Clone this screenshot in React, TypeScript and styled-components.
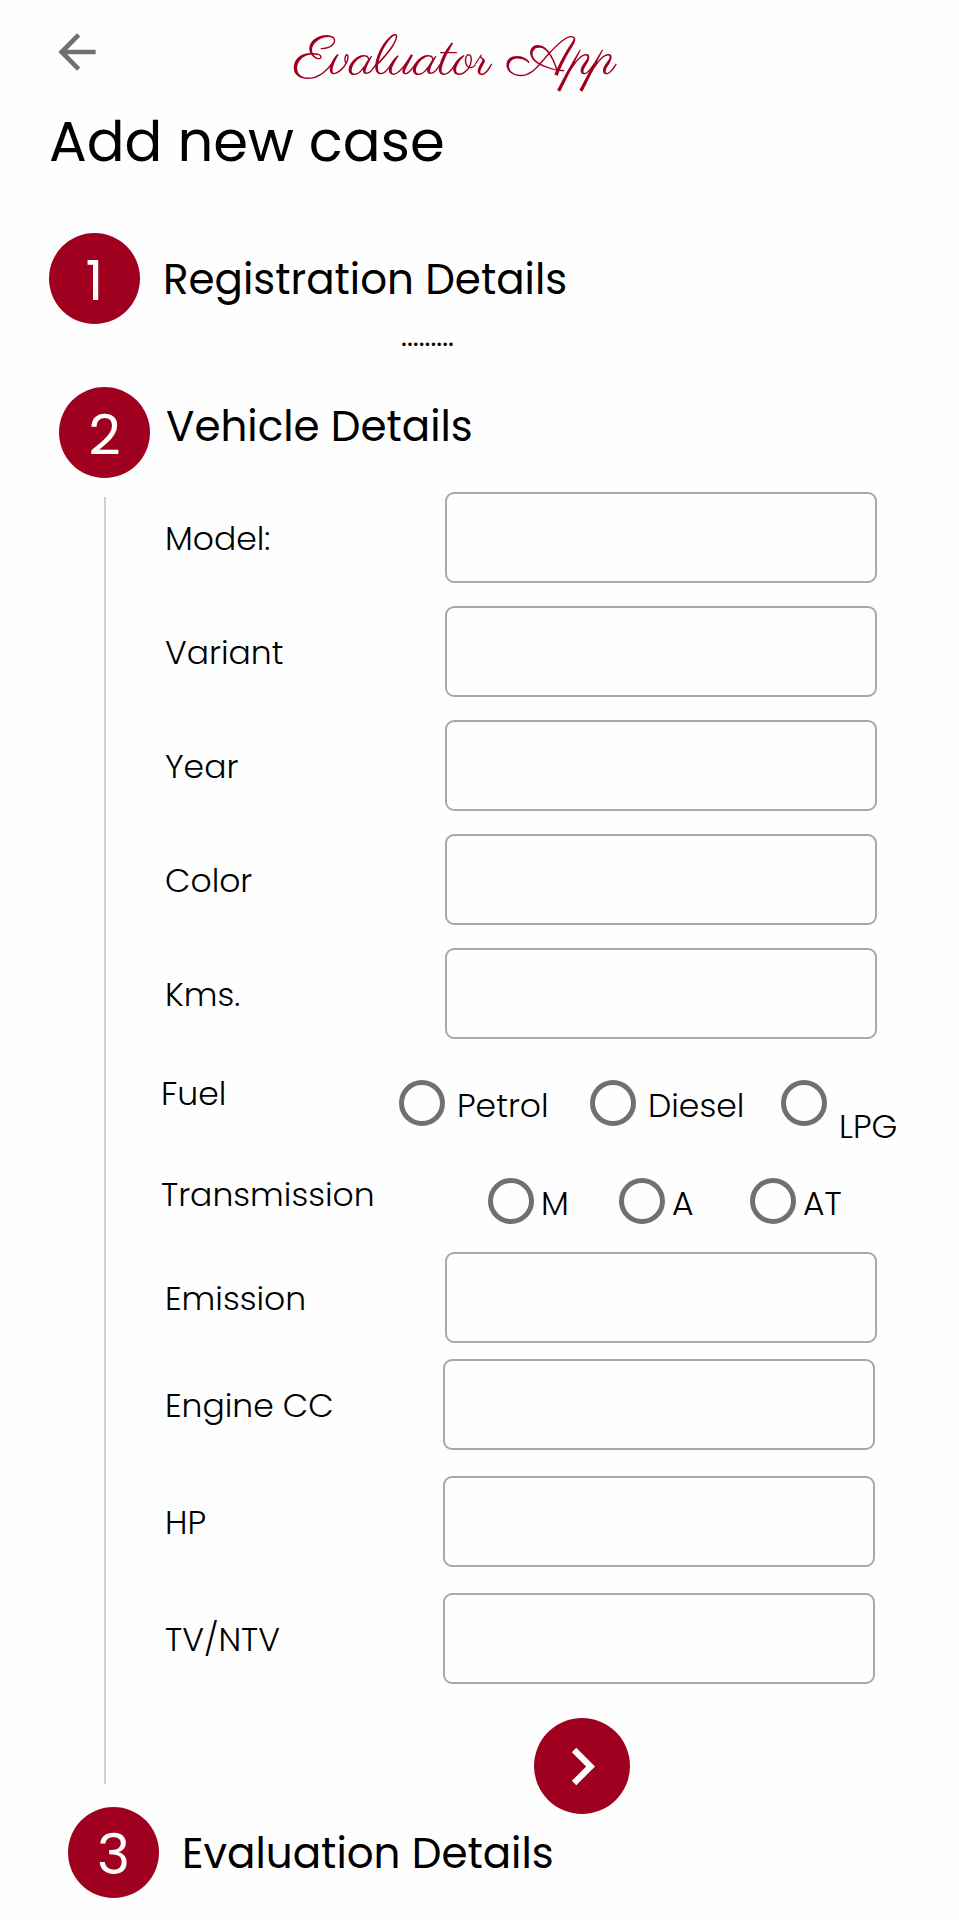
import React from "react";
import styled, { createGlobalStyle } from "styled-components";

const crimson = "#a00020";
const grey = "#707070";

const GlobalStyle = createGlobalStyle`
  *, *::before, *::after { box-sizing: border-box; }
  body {
    margin: 0;
    background: #fefefe;
    color: #000;
    font-family: Poppins, Inter, "Open Sans", sans-serif;
  }
`;

const Page = styled.main`
  padding: 24px 0 22px;
`;

const Header = styled.header`
  display: flex;
  align-items: flex-start;
  padding: 0 154px 0 49px;
`;

const BackButton = styled.button`
  width: 56px;
  height: 56px;
  padding: 0;
  border: 0;
  background: none;
  color: ${grey};
  cursor: pointer;
`;

const Brand = styled.div`
  flex: 1;
  padding-top: 9px;
  text-align: center;
  color: ${crimson};
  font-family: Parisienne, "Liberation Serif", cursive;
  font-size: 56px;
  line-height: 56px;
  white-space: nowrap;
`;

const Title = styled.h1`
  margin: 17px 49px 55px;
  font-size: 56px;
  line-height: 72px;
  font-weight: 400;
`;

const Step = styled.div<{ $indent: number; $gap: number; $raised?: boolean }>`
  display: flex;
  align-items: center;
  gap: ${(p) => p.$gap}px;
  padding-left: ${(p) => p.$indent}px;

  h2 {
    margin: 0;
    padding: ${(p) => (p.$raised ? "0 0 12px" : "2px 0 0")};
    font-size: 42px;
    line-height: 60px;
    font-weight: 400;
  }
`;

const StepNumber = styled.span`
  flex: none;
  width: 91px;
  height: 91px;
  border-radius: 50%;
  background: ${crimson};
  color: #fff;
  font-size: 56px;
  line-height: 96px;
  font-weight: 400;
  text-align: center;
`;

const Collapsed = styled.p`
  margin: 0 0 37px;
  padding-left: 401px;
  font-size: 28px;
  line-height: 26px;
`;

const StepBody = styled.div`
  display: grid;
  grid-template-columns: 2px minmax(0, 1fr);
  column-gap: 55px;
  padding: 14px 0 0 104px;
`;

const Rail = styled.div`
  margin: 5px 0 30px;
  background: #d0d0d0;
`;

const Form = styled.form`
  display: flex;
  flex-direction: column;
`;

const Fields = styled.div<{
  $gap: number;
  $labelWidth: number;
  $right: number;
  $top?: number;
}>`
  display: flex;
  flex-direction: column;
  gap: ${(p) => p.$gap}px;
  margin-top: ${(p) => p.$top ?? 0}px;
  padding: 0 ${(p) => p.$right}px 0 4px;

  label {
    width: ${(p) => p.$labelWidth}px;
  }
`;

const FieldRow = styled.div`
  display: flex;
  align-items: center;

  label {
    flex: none;
    padding-top: 3px;
    font-size: 33px;
    line-height: 48px;
    font-weight: 300;
  }
`;

const TextBox = styled.input`
  flex: 1;
  min-width: 0;
  height: 91px;
  padding: 0 20px;
  border: 2px solid #aea6a6;
  border-radius: 9px;
  background: transparent;
  font: inherit;
  font-size: 33px;
`;

const ChoiceGroup = styled.div`
  margin-top: 31px;
`;

const ChoiceRow = styled.div<{ $height: number }>`
  display: flex;
  align-items: flex-start;
  height: ${(p) => p.$height}px;
  font-size: 33px;
  line-height: 48px;
  font-weight: 300;
`;

const ChoiceName = styled.span<{ $width: number }>`
  flex: none;
  width: ${(p) => p.$width}px;
`;

const Choices = styled.div<{ $pitch: number; $top: number }>`
  display: grid;
  grid-template-columns: ${(p) => p.$pitch}px ${(p) => p.$pitch}px auto;
  padding-top: ${(p) => p.$top}px;
`;

const Choice = styled.label<{ $gap: number; $low?: boolean }>`
  display: flex;
  align-items: flex-start;
  gap: ${(p) => p.$gap}px;

  span {
    padding-top: ${(p) => (p.$low ? 23 : 2)}px;
  }
`;

const Radio = styled.input`
  appearance: none;
  flex: none;
  width: 46px;
  height: 46px;
  margin: 0;
  border: 5px solid ${grey};
  border-radius: 50%;

  &:checked {
    background: radial-gradient(${crimson} 45%, transparent 50%);
  }
`;

const NextButton = styled.button`
  display: grid;
  place-items: center;
  width: 96px;
  height: 96px;
  margin: 34px 0 0 373px;
  padding: 0;
  border: 0;
  border-radius: 50%;
  background: ${crimson};
  color: #fff;
  cursor: pointer;
`;

const LastStep = styled.div`
  margin-top: -7px;
`;

function Field({ id, label }: { id: string; label: string }) {
  return (
    <FieldRow>
      <label htmlFor={id}>{label}</label>
      <TextBox id={id} name={id} type="text" />
    </FieldRow>
  );
}

export default function App() {
  return (
    <>
      <GlobalStyle />
      <Page>
        <Header>
          <BackButton type="button" aria-label="Back">
            <svg width="56" height="56" viewBox="0 0 24 24" fill="currentColor">
              <path d="M20 11H7.83l5.59-5.59L12 4l-8 8 8 8 1.41-1.41L7.83 13H20v-2z" />
            </svg>
          </BackButton>
          <Brand>Evaluator App</Brand>
        </Header>

        <Title>Add new case</Title>

        <Step $indent={49} $gap={23}>
          <StepNumber>1</StepNumber>
          <h2>Registration Details</h2>
        </Step>
        <Collapsed>.........</Collapsed>

        <Step $indent={59} $gap={16} $raised>
          <StepNumber>2</StepNumber>
          <h2>Vehicle Details</h2>
        </Step>

        <StepBody>
          <Rail />
          <Form onSubmit={(e) => e.preventDefault()}>
            <Fields $gap={23} $labelWidth={280} $right={82}>
              <Field id="model" label="Model:" />
              <Field id="variant" label="Variant" />
              <Field id="year" label="Year" />
              <Field id="color" label="Color" />
              <Field id="kms" label="Kms." />
            </Fields>

            <ChoiceGroup>
              <ChoiceRow $height={101} role="radiogroup" aria-labelledby="fuel">
                <ChoiceName id="fuel" $width={238}>Fuel</ChoiceName>
                <Choices $pitch={191} $top={10}>
                  <Choice $gap={12}>
                    <Radio type="radio" name="fuel" value="petrol" />
                    <span>Petrol</span>
                  </Choice>
                  <Choice $gap={12}>
                    <Radio type="radio" name="fuel" value="diesel" />
                    <span>Diesel</span>
                  </Choice>
                  <Choice $gap={12} $low>
                    <Radio type="radio" name="fuel" value="lpg" />
                    <span>LPG</span>
                  </Choice>
                </Choices>
              </ChoiceRow>

              <ChoiceRow $height={81} role="radiogroup" aria-labelledby="transmission">
                <ChoiceName id="transmission" $width={327}>Transmission</ChoiceName>
                <Choices $pitch={131} $top={7}>
                  <Choice $gap={7}>
                    <Radio type="radio" name="transmission" value="m" />
                    <span>M</span>
                  </Choice>
                  <Choice $gap={7}>
                    <Radio type="radio" name="transmission" value="a" />
                    <span>A</span>
                  </Choice>
                  <Choice $gap={7}>
                    <Radio type="radio" name="transmission" value="at" />
                    <span>AT</span>
                  </Choice>
                </Choices>
              </ChoiceRow>
            </ChoiceGroup>

            <Fields $gap={16} $labelWidth={280} $right={82}>
              <Field id="emission" label="Emission" />
            </Fields>
            <Fields $gap={26} $labelWidth={278} $right={84} $top={16}>
              <Field id="engine-cc" label="Engine CC" />
              <Field id="hp" label="HP" />
              <Field id="tv-ntv" label="TV/NTV" />
            </Fields>

            <NextButton type="submit" aria-label="Next">
              <svg width="75" height="75" viewBox="0 0 24 24" fill="currentColor">
                <path d="M10 6L8.59 7.41 13.17 12l-4.58 4.59L10 18l6-6z" />
              </svg>
            </NextButton>
          </Form>
        </StepBody>

        <LastStep>
          <Step $indent={68} $gap={23}>
            <StepNumber>3</StepNumber>
            <h2>Evaluation Details</h2>
          </Step>
        </LastStep>
      </Page>
    </>
  );
}
